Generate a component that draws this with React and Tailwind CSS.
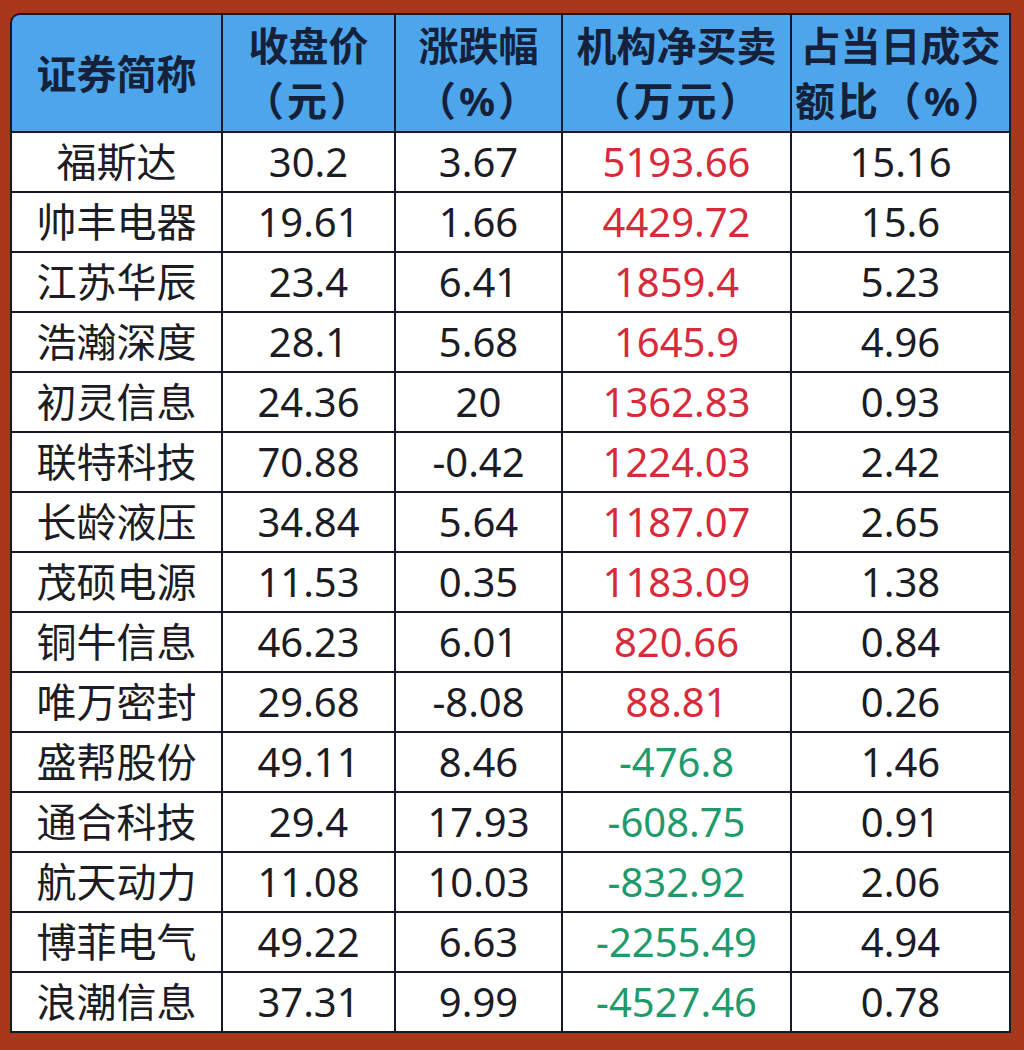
import React from "react";

const rows = [
  ["福斯达", "30.2", "3.67", "5193.66", "15.16"],
  ["帅丰电器", "19.61", "1.66", "4429.72", "15.6"],
  ["江苏华辰", "23.4", "6.41", "1859.4", "5.23"],
  ["浩瀚深度", "28.1", "5.68", "1645.9", "4.96"],
  ["初灵信息", "24.36", "20", "1362.83", "0.93"],
  ["联特科技", "70.88", "-0.42", "1224.03", "2.42"],
  ["长龄液压", "34.84", "5.64", "1187.07", "2.65"],
  ["茂硕电源", "11.53", "0.35", "1183.09", "1.38"],
  ["铜牛信息", "46.23", "6.01", "820.66", "0.84"],
  ["唯万密封", "29.68", "-8.08", "88.81", "0.26"],
  ["盛帮股份", "49.11", "8.46", "-476.8", "1.46"],
  ["通合科技", "29.4", "17.93", "-608.75", "0.91"],
  ["航天动力", "11.08", "10.03", "-832.92", "2.06"],
  ["博菲电气", "49.22", "6.63", "-2255.49", "4.94"],
  ["浪潮信息", "37.31", "9.99", "-4527.46", "0.78"],
];

const headers = [
  ["证券简称"],
  ["收盘价", "（元）"],
  ["涨跌幅", "（%）"],
  ["机构净买卖", "（万元）"],
  ["占当日成交", "额比（%）"],
];

export default function App() {
  return (
    <div
      className="w-[1024px] h-[1050px] bg-[#a8361b] pt-[13px] pl-[10px]"
      style={{ fontFamily: '"Noto Sans", "Noto Sans CJK SC", sans-serif' }}
    >
      <div className="w-[1001px] grid grid-cols-[209px_171px_165px_227px_217px] gap-[2px] p-[2px] bg-[#15192a] rounded-tl-[10px]">
        {/* header */}
        {headers.map((h, i) => (
          <div
            key={i}
            className={`h-[116px] bg-[#4da6ec] flex flex-col items-center justify-center text-[40px] leading-[55px] font-bold text-[#15213a] ${
              i === 0 ? "rounded-tl-[8px]" : ""
            }`}
          >
            {h.map((t, k) => (
              <span
                key={t}
                className={`whitespace-nowrap ${k === 1 ? "tracking-[3px]" : ""}`}
              >
                {t}
              </span>
            ))}
          </div>
        ))}

        {/* body */}
        {rows.map((r) =>
          r.map((v, j) => {
            let color = "text-[#1c1c24]";
            if (j === 3) color = v.startsWith("-") ? "text-[#1f9a6b]" : "text-[#d72b3b]";
            return (
              <div
                key={r[0] + j}
                className={`h-[58px] bg-white flex items-center justify-center text-[40px] leading-none ${color}`}
              >
                {v}
              </div>
            );
          })
        )}
      </div>
    </div>
  );
}
